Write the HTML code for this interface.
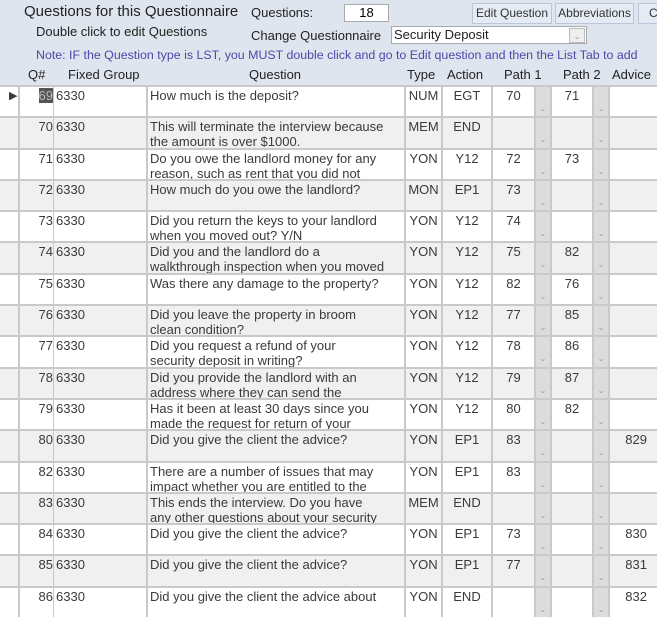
<!DOCTYPE html>
<html><head><meta charset="utf-8"><style>
body{margin:0;width:657px;height:600px;overflow:hidden;background:#dfe5ee;font-family:"Liberation Sans",sans-serif;position:relative}
.a{position:absolute;white-space:nowrap}
.btn{position:absolute;top:3px;height:19px;border:1px solid #b9c6d8;background:#e4ebf5;font-size:12px;color:#333;text-align:center;line-height:19px}
#g{position:absolute;left:0;top:85px;width:657px}
.r{display:flex;height:31.3px;box-sizing:border-box;border-top:2px solid #c9c9c9;font-size:13px;color:#3a3a3a;overflow:hidden}
.r:nth-child(odd){background:#fff}.r:nth-child(even){background:#f0f0f0}
.r>div{box-sizing:border-box;border-right:2px solid #c9c9c9;padding-top:1px;line-height:15px;overflow:hidden}
.s{width:20px}.q{width:34px;text-align:right;border-right:1px solid #c9c9c9!important}.f{width:94px;padding-left:2px}.t{width:258px;padding-left:2px}
.y{width:37px;text-align:center}.c{width:50px;text-align:center}.p{width:43px;text-align:center}.d{width:16px;background:#dcdcdc;color:#999;font-size:8px;text-align:center;padding-top:14px!important}
.v{width:47px;text-align:right;padding-right:10px;border-right:none!important}
</style></head><body>
<div class="a" style="left:24px;top:3px;font-size:15px;color:#222">Questions for this Questionnaire</div>
<div class="a" style="left:251px;top:5px;font-size:13px;color:#222">Questions:</div>
<div class="a" style="left:344px;top:4px;width:43px;height:16px;background:#fff;border:1px solid #aaa;font-size:13px;text-align:center;line-height:16px">18</div>
<div class="btn" style="left:472px;width:78px">Edit Question</div>
<div class="btn" style="left:555px;width:77px">Abbreviations</div>
<div class="btn" style="left:638px;width:30px;text-align:left;padding-left:10px">C</div>
<div class="a" style="left:36px;top:24px;font-size:13px;color:#222">Double click to edit Questions</div>
<div class="a" style="left:251px;top:28px;font-size:13px;color:#222">Change Questionnaire</div>
<div class="a" style="left:391px;top:26px;width:192px;height:16px;background:#fff;border:1px solid #aaa;font-size:13px;line-height:16px;padding-left:2px;color:#222">Security Deposit<span style="position:absolute;right:1px;top:1px;width:14px;height:13px;border:1px solid #bbb;background:#eee;font-size:8px;text-align:center;color:#999">⌄</span></div>
<div class="a" style="left:36px;top:48px;font-size:12.4px;color:#4a4aa8">Note: IF the Question type is LST, you MUST double click and go to Edit question and then the List Tab to add</div>
<div class="a" style="left:28px;top:67px;font-size:13px;color:#222">Q#</div>
<div class="a" style="left:68px;top:67px;font-size:13px;color:#222">Fixed Group</div>
<div class="a" style="left:249px;top:67px;font-size:13px;color:#222">Question</div>
<div class="a" style="left:407px;top:67px;font-size:13px;color:#222">Type</div>
<div class="a" style="left:447px;top:67px;font-size:13px;color:#222">Action</div>
<div class="a" style="left:504px;top:67px;font-size:13px;color:#222">Path 1</div>
<div class="a" style="left:563px;top:67px;font-size:13px;color:#222">Path 2</div>
<div class="a" style="left:612px;top:67px;font-size:13px;color:#222">Advice</div>
<div id="g">
<div class="r"><div class="s" style="font-size:11px;padding:2px 0 0 9px">▶</div><div class="q"><span style="background:#555;color:#bbb">69</span></div><div class="f">6330</div><div class="t">How much is the deposit?</div><div class="y">NUM</div><div class="c">EGT</div><div class="p">70</div><div class="d">⌄</div><div class="p" style="width:42px">71</div><div class="d">⌄</div><div class="v"></div></div>
<div class="r"><div class="s"></div><div class="q">70</div><div class="f">6330</div><div class="t">This will terminate the interview because<br>the amount is over $1000.</div><div class="y">MEM</div><div class="c">END</div><div class="p"></div><div class="d">⌄</div><div class="p" style="width:42px"></div><div class="d">⌄</div><div class="v"></div></div>
<div class="r"><div class="s"></div><div class="q">71</div><div class="f">6330</div><div class="t">Do you owe the landlord money for any<br>reason, such as rent that you did not</div><div class="y">YON</div><div class="c">Y12</div><div class="p">72</div><div class="d">⌄</div><div class="p" style="width:42px">73</div><div class="d">⌄</div><div class="v"></div></div>
<div class="r"><div class="s"></div><div class="q">72</div><div class="f">6330</div><div class="t">How much do you owe the landlord?</div><div class="y">MON</div><div class="c">EP1</div><div class="p">73</div><div class="d">⌄</div><div class="p" style="width:42px"></div><div class="d">⌄</div><div class="v"></div></div>
<div class="r"><div class="s"></div><div class="q">73</div><div class="f">6330</div><div class="t">Did you return the keys to your landlord<br>when you moved out?  Y/N</div><div class="y">YON</div><div class="c">Y12</div><div class="p">74</div><div class="d">⌄</div><div class="p" style="width:42px"></div><div class="d">⌄</div><div class="v"></div></div>
<div class="r"><div class="s"></div><div class="q">74</div><div class="f">6330</div><div class="t">Did you and the landlord do a<br>walkthrough inspection when you moved</div><div class="y">YON</div><div class="c">Y12</div><div class="p">75</div><div class="d">⌄</div><div class="p" style="width:42px">82</div><div class="d">⌄</div><div class="v"></div></div>
<div class="r"><div class="s"></div><div class="q">75</div><div class="f">6330</div><div class="t">Was there any damage to the property?</div><div class="y">YON</div><div class="c">Y12</div><div class="p">82</div><div class="d">⌄</div><div class="p" style="width:42px">76</div><div class="d">⌄</div><div class="v"></div></div>
<div class="r"><div class="s"></div><div class="q">76</div><div class="f">6330</div><div class="t">Did you leave the property in broom<br>clean condition?</div><div class="y">YON</div><div class="c">Y12</div><div class="p">77</div><div class="d">⌄</div><div class="p" style="width:42px">85</div><div class="d">⌄</div><div class="v"></div></div>
<div class="r"><div class="s"></div><div class="q">77</div><div class="f">6330</div><div class="t">Did you request a refund of your<br>security deposit in writing?</div><div class="y">YON</div><div class="c">Y12</div><div class="p">78</div><div class="d">⌄</div><div class="p" style="width:42px">86</div><div class="d">⌄</div><div class="v"></div></div>
<div class="r"><div class="s"></div><div class="q">78</div><div class="f">6330</div><div class="t">Did you provide the landlord with an<br>address where they can send the</div><div class="y">YON</div><div class="c">Y12</div><div class="p">79</div><div class="d">⌄</div><div class="p" style="width:42px">87</div><div class="d">⌄</div><div class="v"></div></div>
<div class="r"><div class="s"></div><div class="q">79</div><div class="f">6330</div><div class="t">Has it been at least 30 days since you<br>made the request for return of your</div><div class="y">YON</div><div class="c">Y12</div><div class="p">80</div><div class="d">⌄</div><div class="p" style="width:42px">82</div><div class="d">⌄</div><div class="v"></div></div>
<div class="r"><div class="s"></div><div class="q">80</div><div class="f">6330</div><div class="t">Did you give the client the advice?</div><div class="y">YON</div><div class="c">EP1</div><div class="p">83</div><div class="d">⌄</div><div class="p" style="width:42px"></div><div class="d">⌄</div><div class="v">829</div></div>
<div class="r"><div class="s"></div><div class="q">82</div><div class="f">6330</div><div class="t">There are a number of issues that may<br>impact whether you are entitled to the</div><div class="y">YON</div><div class="c">EP1</div><div class="p">83</div><div class="d">⌄</div><div class="p" style="width:42px"></div><div class="d">⌄</div><div class="v"></div></div>
<div class="r"><div class="s"></div><div class="q">83</div><div class="f">6330</div><div class="t">This ends the interview. Do you have<br>any other questions about your security</div><div class="y">MEM</div><div class="c">END</div><div class="p"></div><div class="d">⌄</div><div class="p" style="width:42px"></div><div class="d">⌄</div><div class="v"></div></div>
<div class="r"><div class="s"></div><div class="q">84</div><div class="f">6330</div><div class="t">Did you give the client the advice?</div><div class="y">YON</div><div class="c">EP1</div><div class="p">73</div><div class="d">⌄</div><div class="p" style="width:42px"></div><div class="d">⌄</div><div class="v">830</div></div>
<div class="r"><div class="s"></div><div class="q">85</div><div class="f">6330</div><div class="t">Did you give the client the advice?</div><div class="y">YON</div><div class="c">EP1</div><div class="p">77</div><div class="d">⌄</div><div class="p" style="width:42px"></div><div class="d">⌄</div><div class="v">831</div></div>
<div class="r"><div class="s"></div><div class="q">86</div><div class="f">6330</div><div class="t">Did you give the client the advice about</div><div class="y">YON</div><div class="c">END</div><div class="p"></div><div class="d">⌄</div><div class="p" style="width:42px"></div><div class="d">⌄</div><div class="v">832</div></div>
</div>
</body></html>
